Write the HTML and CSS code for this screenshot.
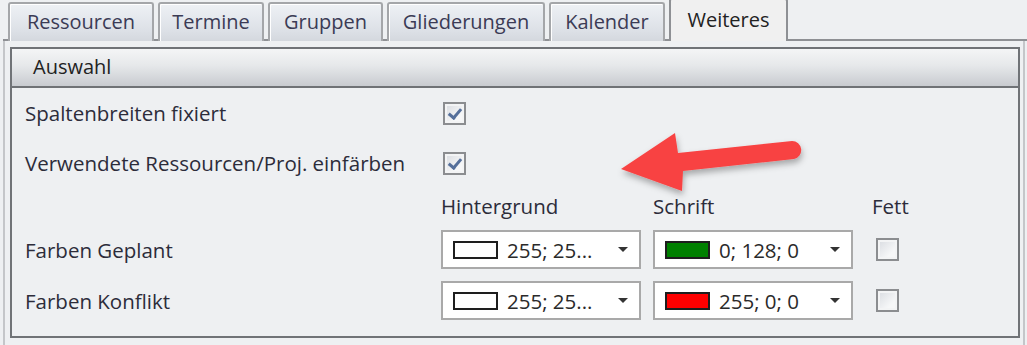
FILE: index.html
```html
<!DOCTYPE html>
<html lang="de">
<head>
    <meta charset="UTF-8">
    <title>Optionen - Weiteres</title>
    <link rel="stylesheet" href="styles.css">
</head>
<body>
    <div class="tabs">
        <div class="tab">Ressourcen</div>
        <div class="tab">Termine</div>
        <div class="tab">Gruppen</div>
        <div class="tab">Gliederungen</div>
        <div class="tab">Kalender</div>
        <div class="tab active">Weiteres</div>
    </div>

    <div class="panel">
        <div class="group">
            <div class="group-head">Auswahl</div>
            <div class="group-body">
                <div class="label">Spaltenbreiten fixiert</div>
                <div class="cell"><span class="check checked"></span></div>
                <div></div><div></div>

                <div class="label">Verwendete Ressourcen/Proj. einfärben</div>
                <div class="cell"><span class="check checked"></span></div>
                <div></div><div></div>

                <div></div>
                <div class="col-head">Hintergrund</div>
                <div class="col-head">Schrift</div>
                <div class="col-head fett">Fett</div>

                <div class="label">Farben Geplant</div>
                <div class="cell"><div class="combo"><span class="swatch" style="background: #ffffff"></span><span class="combo-text">255; 25...</span><span class="caret"></span></div></div>
                <div class="cell"><div class="combo"><span class="swatch" style="background: #008000"></span><span class="combo-text">0; 128; 0</span><span class="caret"></span></div></div>
                <div class="cell fett"><span class="check"></span></div>

                <div class="label">Farben Konflikt</div>
                <div class="cell"><div class="combo"><span class="swatch" style="background: #ffffff"></span><span class="combo-text">255; 25...</span><span class="caret"></span></div></div>
                <div class="cell"><div class="combo"><span class="swatch" style="background: #ff0000"></span><span class="combo-text">255; 0; 0</span><span class="caret"></span></div></div>
                <div class="cell fett"><span class="check"></span></div>
            </div>
        </div>

        <!-- annotation arrow -->
        <svg class="arrow" width="200" height="90" viewBox="0 0 200 90">
            <defs>
                <filter id="shadow" x="-20%" y="-30%" width="140%" height="170%">
                    <feDropShadow dx="1" dy="4" stdDeviation="3" flood-color="#000" flood-opacity="0.3"/>
                </filter>
            </defs>
            <path filter="url(#shadow)" fill="#f84343" d="M8 49 L62 13 L65 33 L179 21 A9.1 9.1 0 0 1 181 39 L70 51 L69 71 Z"/>
        </svg>
    </div>
</body>
</html>
```

FILE: styles.css
```css
body {
    margin: 0;
    width: 1027px;
    height: 345px;
    background: #eef0f2;
    font-family: 'Open Sans', 'DejaVu Sans', sans-serif;
    font-size: 20.5px;
    color: #2c2c3a;
    overflow: hidden;
}
.tabs {
    display: flex;
    align-items: flex-end;
    gap: 4px;
    height: 41px;
    padding-left: 5px;
    border-bottom: 2px solid #8e9094;
    margin-left: 3px;
    box-sizing: border-box;
    font-size: 20px;
}
.tab {
    box-sizing: border-box;
    text-align: center;
    line-height: 36px;
    border: 2px solid #a4a6a9;
    border-bottom: none;
    border-radius: 3px 3px 0 0;
    background: linear-gradient(#eef1f5, #dde1e7 70%, #d4d8de);
    box-shadow: inset 1px 1px 0 #fff;
    color: #3b3b55;
    margin-bottom: -2px;
    height: 39px;
    white-space: nowrap;
}
.tab:nth-child(1) { width: 146px; }
.tab:nth-child(2) { width: 106px; }
.tab:nth-child(3) { width: 115px; }
.tab:nth-child(4) { width: 158px; }
.tab:nth-child(5) { width: 116px; }
.tab:nth-child(6) { width: 119px; }
.tab.active {
    height: 43px;
    line-height: 40px;
    background: #f0f0f0;
    border-color: #8e9094;
    box-shadow: none;
    color: #222;
}
.panel {
    position: relative;
    margin: 0 0 0 3px;
    width: 1022px;
    height: 304px;
    box-sizing: border-box;
    border-left: 2px solid #c4c6c9;
    border-right: 2px solid #c4c6c9;
    padding: 6px 5px 0 5px;
}
.group {
    border: 2px solid #707377;
    width: 1010px;
    box-sizing: border-box;
    height: 291px;
}
.group-head {
    height: 37px;
    line-height: 36px;
    padding-left: 21px;
    font-size: 20px;
    background: linear-gradient(#f4f5f6, #e6e8ea 45%, #c8cbd0);
    border-bottom: 2px solid #6f7276;
    color: #222;
}
.group-body {
    display: grid;
    grid-template-columns: 404px 200px 200px auto;
    grid-template-rows: 50px 50px 36px 51px 51px;
    column-gap: 12px;
    padding-left: 13px;
    align-items: center;
}
.label,
.col-head {
    color: #2c2c3a;
}
.cell {
    display: flex;
    align-items: center;
}
.col-head.fett {
    padding-left: 7px;
}
.cell.fett {
    padding-left: 9px;
}
.check {
    display: inline-block;
    width: 23px;
    height: 23px;
    box-sizing: border-box;
    margin-left: 2px;
    border: 2px solid #8b8d90;
    background: linear-gradient(135deg, #d8dbe0, #f6f7f8 70%);
    box-shadow: inset 0 0 0 2px #f3f4f5;
    position: relative;
}
.check.checked::after {
    content: "";
    position: absolute;
    left: 6px;
    top: 2px;
    width: 5px;
    height: 10px;
    border: solid #56709b;
    border-width: 0 3px 3px 0;
    transform: rotate(40deg);
}
.combo {
    display: flex;
    align-items: center;
    width: 200px;
    height: 39px;
    box-sizing: border-box;
    border: 2px solid #a9a9a9;
    background: #fff;
    padding-left: 10px;
}
.swatch {
    width: 45px;
    height: 18px;
    box-sizing: border-box;
    border: 2px solid #1e1e1e;
    flex: none;
}
.combo-text {
    margin-left: 9px;
    flex: 1;
    color: #2a2a2a;
}
.caret {
    width: 0;
    height: 0;
    border-left: 5px solid transparent;
    border-right: 5px solid transparent;
    border-top: 5px solid #333;
    margin-right: 11px;
}
.arrow {
    position: absolute;
    left: 608px;
    top: 79px;
}
```
